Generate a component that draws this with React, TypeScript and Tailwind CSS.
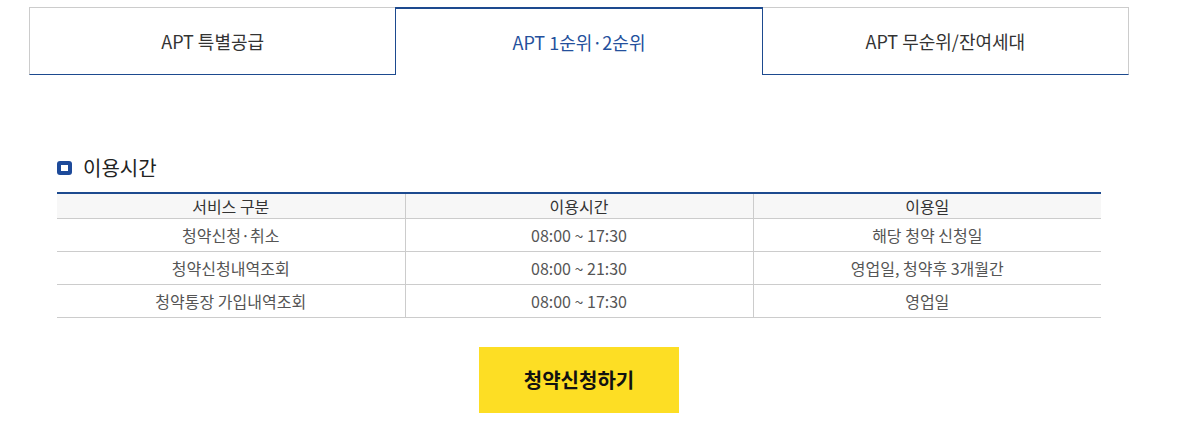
const rows = [
  ["청약신청·취소", "08:00 ~ 17:30", "해당 청약 신청일"],
  ["청약신청내역조회", "08:00 ~ 21:30", "영업일, 청약후 3개월간"],
  ["청약통장 가입내역조회", "08:00 ~ 17:30", "영업일"],
];

export default function App() {
  return (
    <div
      className="min-h-screen bg-white"
      style={{ fontFamily: '"Noto Sans CJK KR", "Noto Sans", sans-serif' }}
    >
      <div className="ml-[29px] w-[1100px] pt-[7px]">
        {/* tabs */}
        <div className="flex h-[68px]">
          <button className="flex-1 border-t border-l border-b border-t-[#cccccc] border-l-[#cccccc] border-b-[#1d4a8f] text-[18px] text-[#333]">
            APT 특별공급
          </button>
          <button className="flex-1 border-t-2 border-x border-[#1d4a8f] text-[18px] text-[#24509c]">
            APT 1순위·2순위
          </button>
          <button className="flex-1 border-t border-r border-b border-t-[#cccccc] border-r-[#cccccc] border-b-[#1d4a8f] text-[18px] text-[#333]">
            APT 무순위/잔여세대
          </button>
        </div>

        <div className="mx-[28px] mt-[81px]">
          <div className="flex h-[24px] items-center gap-[11px]">
            <span className="flex h-[14px] w-[15px] items-center justify-center rounded-[3px] bg-[#1d4a9a]">
              <span className="h-[6px] w-[7px] bg-white" />
            </span>
            <h2 className="text-[20px] leading-none text-[#222]">이용시간</h2>
          </div>

          <table className="mt-[12px] w-full table-fixed border-collapse border-t-2 border-[#1d4a8f] text-[16px]">
            <thead>
              <tr className="h-[25px] bg-[#f7f7f7] text-[#333]">
                <th className="border-b border-[#cccccc] font-normal leading-none">서비스 구분</th>
                <th className="border-b border-l border-[#cccccc] font-normal leading-none">이용시간</th>
                <th className="border-b border-l border-[#cccccc] font-normal leading-none">이용일</th>
              </tr>
            </thead>
            <tbody className="text-[#555]">
              {rows.map((r) => (
                <tr key={r[0]} className="h-[33px]">
                  <td className="border-b border-[#cccccc] text-center leading-none">{r[0]}</td>
                  <td className="border-b border-l border-[#cccccc] text-center leading-none">{r[1]}</td>
                  <td className="border-b border-l border-[#cccccc] text-center leading-none">{r[2]}</td>
                </tr>
              ))}
            </tbody>
          </table>

          <div className="mt-[29px] flex justify-center">
            <button className="h-[66px] w-[200px] bg-[#fdde24] text-[20px] font-bold text-[#111]">
              청약신청하기
            </button>
          </div>
        </div>
      </div>
    </div>
  );
}
